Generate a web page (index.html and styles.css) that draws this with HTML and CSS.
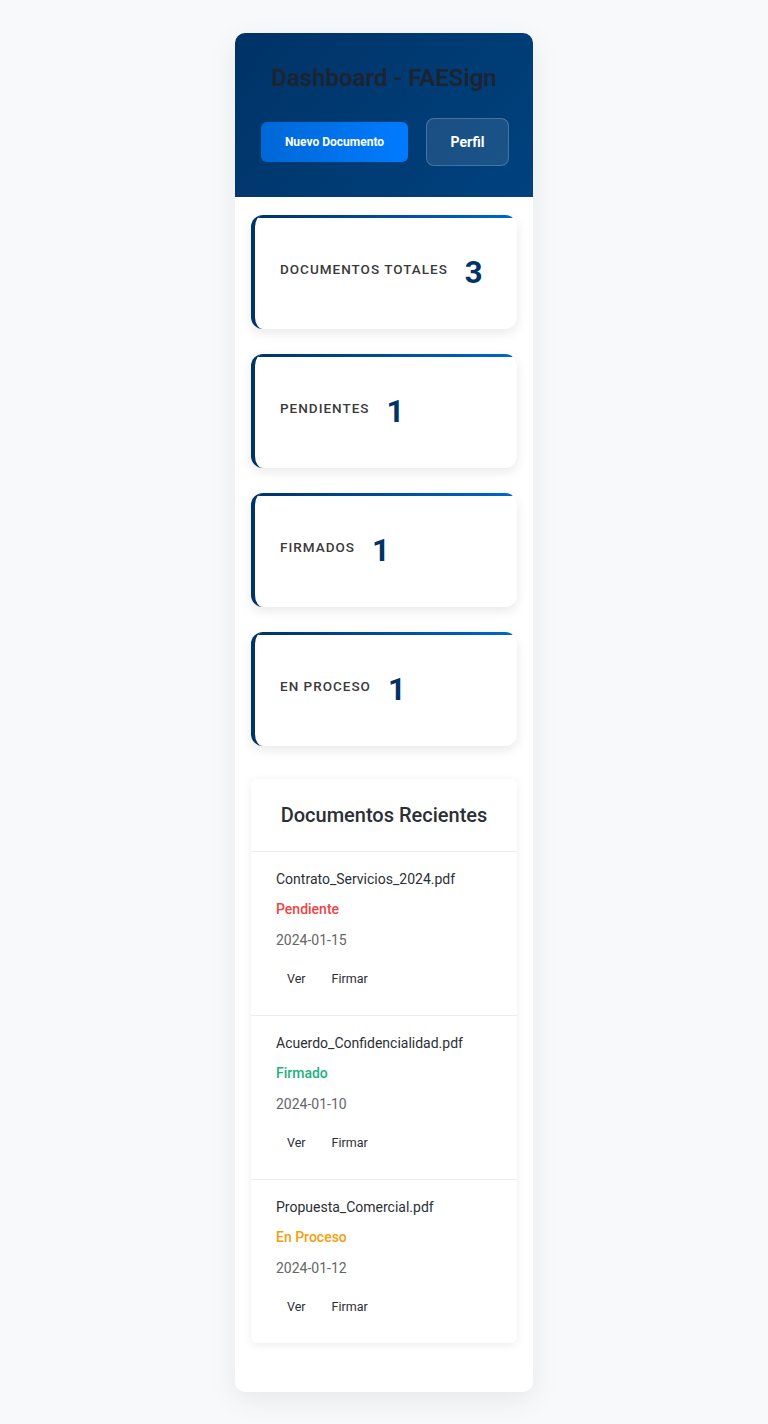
FILE: index.html
```html
<!DOCTYPE html>
<html lang="es">
<head>
<meta charset="utf-8">
<title>Dashboard - FAESign</title>
<link rel="stylesheet" href="styles.css">
</head>
<body>
<div class="app">
  <header class="header">
    <h1 class="title">Dashboard - FAESign</h1>
    <div class="actions">
      <button class="btn-primary">Nuevo Documento</button>
      <button class="btn-ghost">Perfil</button>
    </div>
  </header>
  <main class="content">
    <div class="stat-card"><span class="stat-label">Documentos Totales</span><span class="stat-value">3</span></div>
    <div class="stat-card"><span class="stat-label">Pendientes</span><span class="stat-value">1</span></div>
    <div class="stat-card"><span class="stat-label">Firmados</span><span class="stat-value">1</span></div>
    <div class="stat-card"><span class="stat-label">En Proceso</span><span class="stat-value">1</span></div>

    <section class="recent">
      <h2 class="recent-title">Documentos Recientes</h2>
      <div class="doc">
        <p class="doc-name">Contrato_Servicios_2024.pdf</p>
        <p class="doc-status pending">Pendiente</p>
        <p class="doc-date">2024-01-15</p>
        <div class="doc-actions"><button class="link-btn">Ver</button><button class="link-btn">Firmar</button></div>
      </div>
      <div class="doc">
        <p class="doc-name">Acuerdo_Confidencialidad.pdf</p>
        <p class="doc-status signed">Firmado</p>
        <p class="doc-date">2024-01-10</p>
        <div class="doc-actions"><button class="link-btn">Ver</button><button class="link-btn">Firmar</button></div>
      </div>
      <div class="doc">
        <p class="doc-name">Propuesta_Comercial.pdf</p>
        <p class="doc-status process">En Proceso</p>
        <p class="doc-date">2024-01-12</p>
        <div class="doc-actions"><button class="link-btn">Ver</button><button class="link-btn">Firmar</button></div>
      </div>
    </section>
  </main>
</div>
</body>
</html>
```

FILE: styles.css
```css
* { box-sizing: border-box; }
body {
  margin: 0;
  background: #f8f9fb;
  font-family: Roboto, "Liberation Sans", Arial, sans-serif;
  color: #333;
}
.app {
  width: 298px;
  margin: 33px auto 32px;
  background: #fff;
  border-radius: 10px;
  overflow: hidden;
  box-shadow: 0 8px 30px rgba(0, 0, 0, 0.07);
}
.header {
  height: 164px;
  background: linear-gradient(135deg, #003366 0%, #00427f 100%);
  padding: 31px 0 0;
  display: flex;
  flex-direction: column;
  align-items: center;
}
.title {
  margin: 0;
  font-size: 24px;
  line-height: 28px;
  font-weight: 600;
  color: #1d2430;
}
.actions {
  margin-top: 26px;
  display: flex;
  align-items: center;
  gap: 18px;
  padding-left: 2px;
}
.btn-primary {
  width: 147px;
  height: 40px;
  border: none;
  border-radius: 6px;
  background: linear-gradient(90deg, #0068d6, #007bff);
  color: #fff;
  font-family: inherit;
  font-size: 12px;
  font-weight: 700;
}
.btn-ghost {
  width: 83px;
  height: 48px;
  border: 1px solid rgba(255, 255, 255, 0.2);
  border-radius: 8px;
  background: rgba(255, 255, 255, 0.1);
  color: #fff;
  font-family: inherit;
  font-size: 14px;
  font-weight: 700;
}
.content {
  padding: 18px 16px 49px;
  display: flex;
  flex-direction: column;
}
.stat-card {
  position: relative;
  height: 114px;
  margin-bottom: 25px;
  background: #fff;
  border-radius: 12px;
  border-left: 4px solid #003366;
  box-shadow: 0 4px 12px rgba(0, 0, 0, 0.09);
  overflow: hidden;
  display: flex;
  align-items: center;
  gap: 17px;
  padding: 0 0 2px 25px;
}
.stat-card::before {
  content: "";
  position: absolute;
  top: 0;
  left: 0;
  right: 0;
  height: 3px;
  background: linear-gradient(90deg, #003366, #0066cc);
}
.stat-label {
  font-size: 13.5px;
  font-weight: 500;
  letter-spacing: 1px;
  text-transform: uppercase;
  color: #3a3a3a;
  margin-top: -5px;
  -webkit-font-smoothing: antialiased;
  font-variation-settings: "wght" 450;
}
.stat-value {
  font-size: 31px;
  font-weight: 700;
  color: #003366;
  line-height: 36px;
  margin-top: 3px;
}
.stat-card:nth-of-type(4) { margin-bottom: 33px; }
.recent {
  background: #fff;
  border-radius: 6px;
  box-shadow: 0 2px 8px rgba(0, 0, 0, 0.08);
  overflow: hidden;
}
.recent-title {
  margin: 0;
  height: 73px;
  border-bottom: 1px solid #ececec;
  display: flex;
  align-items: center;
  justify-content: center;
  font-size: 20px;
  font-weight: 500;
  color: #2b2f36;
}
.doc {
  padding: 17px 25px 24px;
  border-bottom: 1px solid #ececec;
}
.doc:last-child { border-bottom: none; }
.doc p {
  margin: 0 0 10px;
  font-size: 14px;
  line-height: 20px;
}
.doc-name { color: #2b2f36; }
.doc-status { font-weight: 500; }
.doc .doc-status { margin-bottom: 11px; }
.pending { color: #ef4444; }
.signed { color: #22b07d; }
.process { color: #f59e0b; }
.doc-date { color: #666; }
.doc .doc-date { margin-bottom: 15px; }
.doc-actions { display: flex; gap: 3px; }
.link-btn {
  border: none;
  background: transparent;
  font-family: inherit;
  font-size: 12.5px;
  color: #2b2f36;
  padding: 6px 12px 6px 11px;
  height: 26px;
}
```
